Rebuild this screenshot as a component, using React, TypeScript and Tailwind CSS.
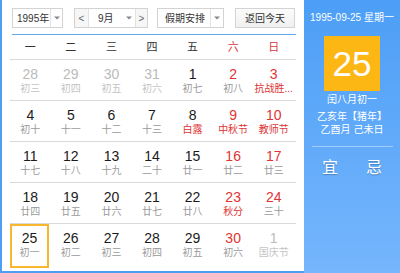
type Day = { n: number; l: string; dim?: boolean; redN?: boolean; redL?: boolean; today?: boolean };

const weeks: Day[][] = [
  [
    { n: 28, l: '初三', dim: true },
    { n: 29, l: '初四', dim: true },
    { n: 30, l: '初五', dim: true },
    { n: 31, l: '初六', dim: true },
    { n: 1, l: '初七' },
    { n: 2, l: '初八', redN: true },
    { n: 3, l: '抗战胜...', redN: true, redL: true },
  ],
  [
    { n: 4, l: '初十' },
    { n: 5, l: '十一' },
    { n: 6, l: '十二' },
    { n: 7, l: '十三' },
    { n: 8, l: '白露', redL: true },
    { n: 9, l: '中秋节', redN: true, redL: true },
    { n: 10, l: '教师节', redN: true, redL: true },
  ],
  [
    { n: 11, l: '十七' },
    { n: 12, l: '十八' },
    { n: 13, l: '十九' },
    { n: 14, l: '二十' },
    { n: 15, l: '廿一' },
    { n: 16, l: '廿二', redN: true },
    { n: 17, l: '廿三', redN: true },
  ],
  [
    { n: 18, l: '廿四' },
    { n: 19, l: '廿五' },
    { n: 20, l: '廿六' },
    { n: 21, l: '廿七' },
    { n: 22, l: '廿八' },
    { n: 23, l: '秋分', redN: true, redL: true },
    { n: 24, l: '三十', redN: true },
  ],
  [
    { n: 25, l: '初一', today: true },
    { n: 26, l: '初二' },
    { n: 27, l: '初三' },
    { n: 28, l: '初四' },
    { n: 29, l: '初五' },
    { n: 30, l: '初六', redN: true },
    { n: 1, l: '国庆节', dim: true },
  ],
];

const weekdays = ['一', '二', '三', '四', '五', '六', '日'];

function Caret() {
  return (
    <svg width="6" height="4" viewBox="0 0 6 4">
      <path d="M0 0.5h6L3 3.5z" fill="#888" />
    </svg>
  );
}

function Cell({ d }: { d: Day }) {
  const numColor = d.dim ? 'text-[#bbbbbb]' : d.redN ? 'text-[#de3434]' : 'text-[#1a1a1a]';
  const lunarColor = d.dim ? 'text-[#c4c4c4]' : d.redL ? 'text-[#de3434]' : 'text-[#9a9a9a]';
  if (d.today) {
    return (
      <div className="flex justify-start">
        <div className="w-[39px] h-[44px] border-2 border-[#f8b82e] flex flex-col items-center pt-[4px]">
          <div className={`text-[14px] leading-[17px] ${numColor}`}>{d.n}</div>
          <div className="text-[10px] leading-[12px] text-[#9a9a9a] whitespace-nowrap">{d.l}</div>
        </div>
      </div>
    );
  }
  return (
    <div className="flex flex-col items-center pt-[6px]">
      <div className={`text-[14px] leading-[17px] ${numColor}`}>{d.n}</div>
      <div className={`text-[10px] leading-[12px] whitespace-nowrap ${lunarColor}`}>{d.l}</div>
    </div>
  );
}

export default function App() {
  return (
    <div
      className="flex w-[400px] h-[273px] overflow-hidden bg-white"
      style={{ fontFamily: '"Liberation Sans", "Noto Sans CJK SC", sans-serif' }}>
      {/* Left: calendar */}
      <div className="w-[304px] h-[273px] border-l-2 border-b-2 border-[#4f9ef5] pt-[8px] pl-[8px]">
        {/* Controls */}
        <div className="ml-[2px] flex h-[20px] text-[10px] text-[#333] whitespace-nowrap">
          <div className="flex w-[51px] border border-[#d3d3d3] bg-white">
            <div className="w-[37px] flex items-center pl-[4px]">1995年</div>
            <div className="flex-1 border-l border-[#e2e2e2] flex items-center justify-center">
              <Caret />
            </div>
          </div>
          <div className="ml-[11px] flex w-[74px] border border-[#d3d3d3] bg-white">
            <div className="w-[14px] border-r border-[#e2e2e2] bg-[#f6f6f6] flex items-center justify-center text-[#666]">
              &lt;
            </div>
            <div className="w-[46px] flex items-center pl-[9px]">
              <span>9月</span>
              <span className="ml-[12px] flex">
                <Caret />
              </span>
            </div>
            <div className="flex-1 border-l border-[#e2e2e2] bg-[#f6f6f6] flex items-center justify-center text-[#666]">
              &gt;
            </div>
          </div>
          <div className="ml-[9px] flex w-[67px] border border-[#d3d3d3] bg-white">
            <div className="w-[52px] flex items-center pl-[7px]">假期安排</div>
            <div className="flex-1 border-l border-[#e2e2e2] flex items-center justify-center">
              <Caret />
            </div>
          </div>
          <div className="ml-[11px] w-[60px] border border-[#d3d3d3] bg-gradient-to-b from-[#fcfcfc] to-[#f0f0f0] flex items-center justify-center">
            返回今天
          </div>
        </div>
        <div className="ml-[2px] mt-[6px] w-[284px] h-px bg-[#62a8ec]" />

        {/* Weekday header */}
        <div className="w-[284px] h-[24px] grid grid-cols-7 items-center text-[11px]">
          {weekdays.map((w, i) => (
            <div key={w} className={`text-center ${i >= 5 ? 'text-[#d43a3a]' : 'text-[#333]'}`}>
              {w}
            </div>
          ))}
        </div>

        {/* Weeks */}
        {weeks.map((week, wi) => (
          <div key={wi} className={`w-[286px] border-t border-[#d9d9d9] ${wi === 4 ? 'h-[45px]' : 'h-[41px]'}`}>
            <div className="w-[284px] grid grid-cols-7">
              {week.map((d, di) => (
                <Cell key={di} d={d} />
              ))}
            </div>
          </div>
        ))}
      </div>

      {/* Right: day detail */}
      <div className="w-[96px] h-[273px] bg-gradient-to-b from-[#4c9ef6] to-[#75b6fd] flex flex-col items-center text-white">
        <div className="mt-[12px] text-[10px] leading-[12px] whitespace-nowrap">1995-09-25 星期一</div>
        <div className="mt-[12px] w-[56px] h-[55px] bg-[#fcb714] flex items-center justify-center text-[35px] leading-none">
          25
        </div>
        <div className="mt-[3px] text-[10px] leading-[12px]">闰八月初一</div>
        <div className="mt-[5px] text-[10px] leading-[12px] whitespace-nowrap">乙亥年【猪年】</div>
        <div className="mt-[1px] text-[10px] leading-[12px] whitespace-nowrap">乙酉月 己未日</div>
        <div className="mt-[10px] w-[81px] h-px bg-[#9fcdfb]" />
        <div className="mt-[12px] flex w-[80px] justify-between px-[10px] text-[16px] leading-[18px] [text-shadow:0_1px_1px_rgba(0,0,0,0.25)]">
          <span>宜</span>
          <span>忌</span>
        </div>
      </div>
    </div>
  );
}
